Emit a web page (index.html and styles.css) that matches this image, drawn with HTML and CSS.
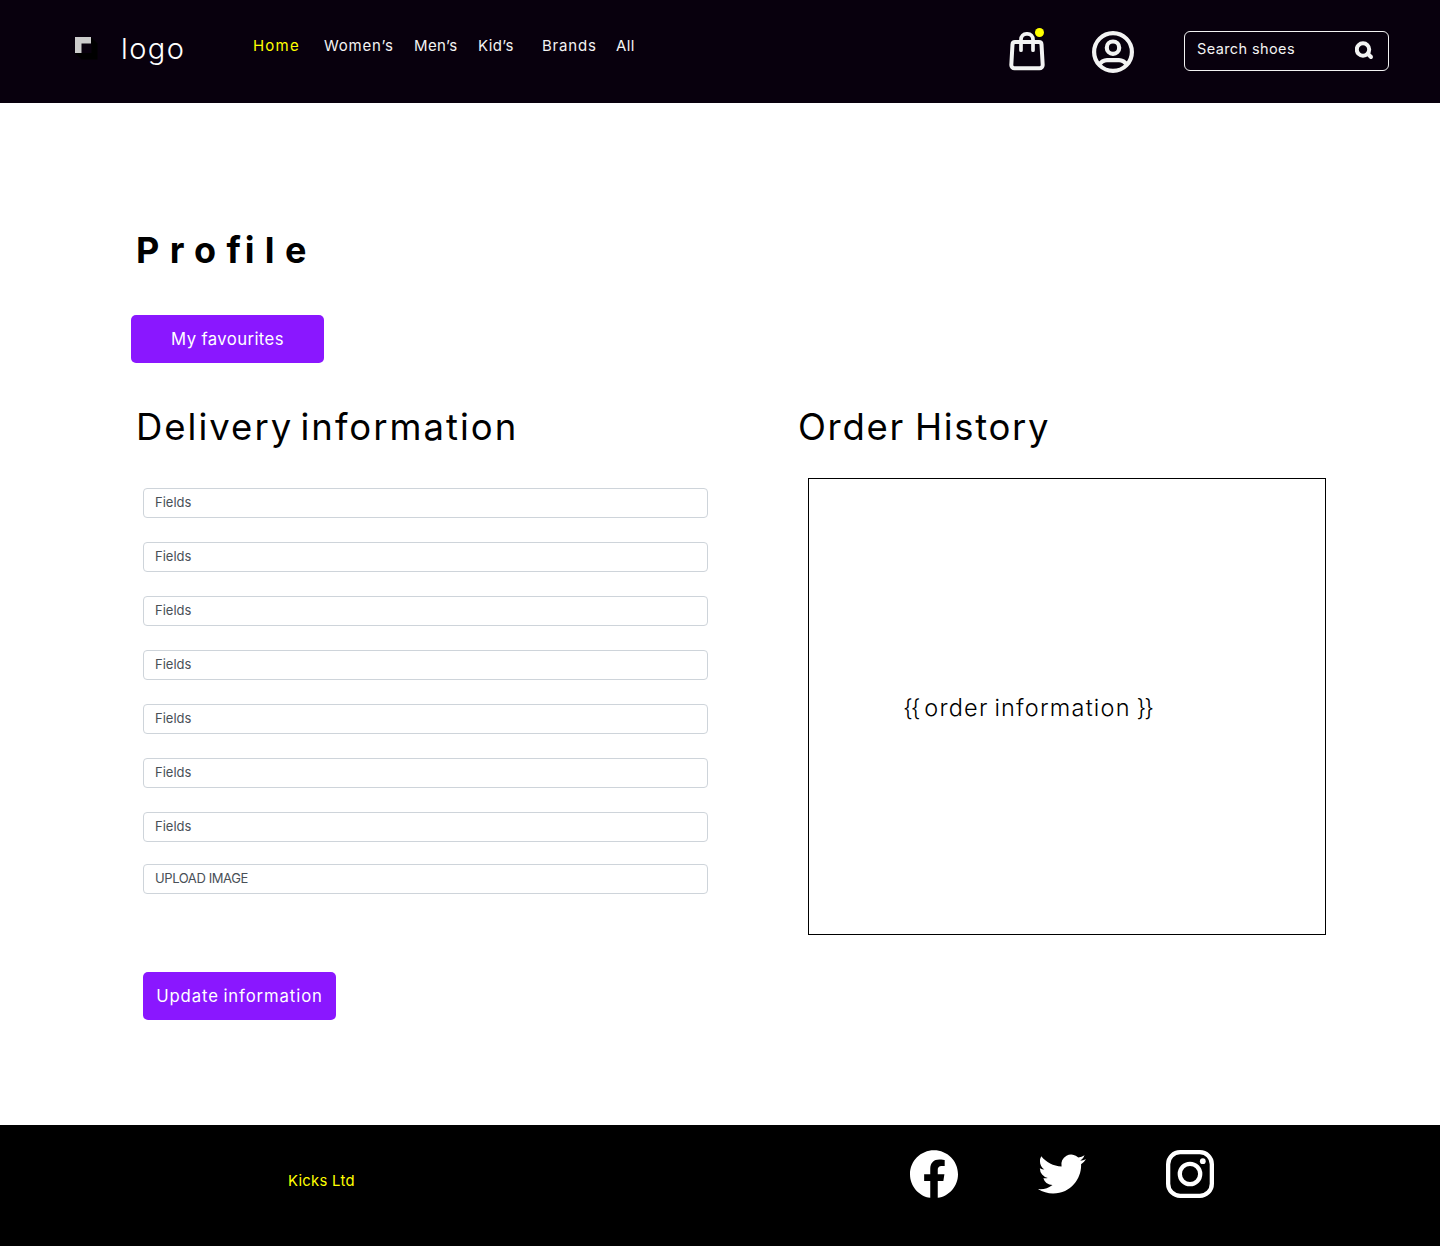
FILE: index.html
```html
<!DOCTYPE html>
<html lang="en">
<head>
<meta charset="utf-8">
<title>Profile</title>
<link rel="stylesheet" href="styles.css">
</head>
<body>
<header class="header">
  <a class="brand">
    <svg class="brand-mark" width="23" height="23" viewBox="0 0 23 23"><path fill="#000" d="M16 0l6.500 6.500V22.500H6.500L0 16z"/><path fill="#08000d" d="M6.500 6.500h10v9.500h-10z"/><path fill="#ccc" d="M0 0h16v6.500H6.500V16H0z"/></svg>
    <span class="brand-name">logo</span>
  </a>
  <nav class="nav">
    <a class="active">Home</a><a>Women’s</a><a class="snug">Men’s</a><a class="snug">Kid’s</a><a>Brands</a><a class="snug">All</a>
  </nav>
  <div class="tools">
    <svg class="bag" width="38" height="46" viewBox="0 0 38 46" fill="none" stroke="#f3f3f3" stroke-width="4" stroke-linecap="round" stroke-linejoin="round"><path d="M7 14H31a2.500 2.500 0 0 1 2.500 2.300L34.700 37a3.200 3.200 0 0 1-3.200 3.200H6.500A3.200 3.200 0 0 1 3.300 37L4.500 16.300A2.500 2.500 0 0 1 7 14z"/><path stroke-width="3.700" d="M13 22.200V11.500a5.500 5.500 0 0 1 5.500-5.700h1a5.500 5.500 0 0 1 5.500 5.700V22.200"/><circle cx="31.500" cy="4.500" r="4.500" fill="#ff0" stroke="none"/></svg>
    <svg class="user" width="42" height="42" viewBox="0 0 42 42" fill="none" stroke="#f3f3f3" stroke-width="4.200"><circle cx="21" cy="21" r="18.900"/><circle cx="21" cy="16.700" r="6.200"/><path d="M6.500 34.500C9 31 11.500 29.200 15 29.200H27c3.500 0 6 1.800 8.500 5.300"/></svg>
    <div class="search">
      <span>Search shoes</span>
      <svg width="19" height="19" viewBox="0 0 19 19" fill="none" stroke="#f3f3f3" stroke-width="4"><circle cx="8" cy="8.500" r="6.200"/><path stroke-linecap="round" d="M13 13l3 3"/></svg>
    </div>
  </div>
</header>
<main class="main">
  <h1 class="title">Pro<span class="title-tight">f</span>ile</h1>
  <button class="button favourites"><span>My favourites</span></button>
  <div class="columns">
    <section class="delivery">
      <h2 class="heading delivery-heading">Delivery information</h2>
      <div class="fields">
        <div class="field">Fields</div>
        <div class="field">Fields</div>
        <div class="field">Fields</div>
        <div class="field">Fields</div>
        <div class="field">Fields</div>
        <div class="field">Fields</div>
        <div class="field">Fields</div>
        <div class="field upload">UPLOAD IMAGE</div>
      </div>
      <button class="button update"><span>Update information</span></button>
    </section>
    <section class="history">
      <h2 class="heading history-heading">Order History</h2>
      <div class="orders"><span class="brace">{{</span> order information <span class="brace">}}</span></div>
    </section>
  </div>
</main>
<footer class="footer">
  <span class="company">Kicks Ltd</span>
  <div class="social">
    <svg width="48" height="48" viewBox="0 0 24 24" fill="#fff"><path d="M24 12.073c0-6.627-5.373-12-12-12s-12 5.373-12 12c0 5.990 4.388 10.954 10.125 11.854v-8.385H7.078v-3.470h3.047V9.430c0-3.007 1.792-4.669 4.533-4.669 1.312 0 2.686.235 2.686.235v2.953H15.830c-1.491 0-1.956.925-1.956 1.874v2.250h3.328l-.532 3.470h-2.796v8.385C19.612 23.027 24 18.062 24 12.073z"/></svg>
    <svg width="48" height="48" viewBox="0 0 24 24" fill="#fff"><path d="M23.953 4.570a10 10 0 0 1-2.825.775 4.958 4.958 0 0 0 2.163-2.723c-.951.555-2.005.959-3.127 1.184a4.920 4.920 0 0 0-8.384 4.482C7.690 8.095 4.067 6.130 1.640 3.162a4.822 4.822 0 0 0-.666 2.475c0 1.710.870 3.213 2.188 4.096a4.904 4.904 0 0 1-2.228-.616v.060a4.923 4.923 0 0 0 3.946 4.827 4.996 4.996 0 0 1-2.212.085 4.936 4.936 0 0 0 4.604 3.417 9.867 9.867 0 0 1-6.102 2.105c-.390 0-.779-.023-1.170-.067a13.995 13.995 0 0 0 7.557 2.209c9.053 0 13.998-7.496 13.998-13.985 0-.210 0-.420-.015-.630A9.935 9.935 0 0 0 24 4.590z"/></svg>
    <svg width="48" height="48" viewBox="0 0 48 48" fill="none" stroke="#fff" stroke-width="4.300"><rect x="2.150" y="2.150" width="43.700" height="43.700" rx="12"/><circle cx="24" cy="24" r="10.200"/><circle cx="36.800" cy="11.200" r="2.900" fill="#fff" stroke="none"/></svg>
  </div>
</footer>
</body>
</html>
```
FILE: styles.css
```css
* { box-sizing: border-box; }
body { margin: 0; background: #fff; color: #000; font-family: Inter, sans-serif; }
svg { display: block; flex: none; }
h1, h2 { margin: 0; }
span, a { white-space: nowrap; }

.header { display: flex; align-items: flex-start; height: 103px; padding-left: 75px; background: #08000d; color: #f3f3f3; }
.brand { display: flex; width: 178px; padding-top: 37px; }
.brand-name { margin-left: 23px; color: #fff; font-size: 29px; font-weight: 300; line-height: 24px; letter-spacing: 1.4px; }
.nav { display: grid; grid-template-columns: 71px 90px 64px 64px 74px auto; width: 756px; padding-top: 36px; font-size: 15px; line-height: 20px; letter-spacing: 0.8px; }
.active { color: #ff0; letter-spacing: 1.2px; }
.snug { letter-spacing: 0.4px; }
.tools { display: flex; align-items: flex-start; padding-top: 28px; }
.bag { margin-left: -1px; }
.user { margin: 3px 50px 0 46px; }
.search { display: flex; justify-content: space-between; width: 205px; height: 40px; margin-top: 3px; padding: 9px 14px 0 12px; border: 1px solid #f3f3f3; border-radius: 6px; font-size: 14.5px; line-height: 16px; letter-spacing: 0.4px; }

.main { height: 1022px; padding: 122px 0 0 131px; }
.title { padding-left: 5px; font-size: 36px; font-weight: 700; line-height: 50px; letter-spacing: 10.4px; }
.title-tight { letter-spacing: 4px; }
.button { display: flex; align-items: center; justify-content: center; width: 193px; height: 48px; padding: 0; border: 0; border-radius: 5px; background: #8a17ff; color: #fff; font-family: inherit; font-size: 16.7px; }
.favourites { margin-top: 40px; letter-spacing: 0.4px; }
.columns { display: flex; margin-top: 39px; }
.delivery { width: 665px; }
.heading { font-size: 36.5px; font-weight: 400; line-height: 50px; }
.delivery-heading { padding-left: 5px; letter-spacing: 2px; word-spacing: -5px; }
.history-heading { padding-left: 2px; letter-spacing: 1.7px; word-spacing: -2px; }
.fields { display: grid; gap: 24px; width: 565px; margin: 36px 0 0 12px; }
.field { height: 30px; padding-left: 11px; border: 1px solid #ced4da; border-radius: 4px; color: #495057; font-size: 13px; line-height: 26px; }
.upload { margin-top: -2px; letter-spacing: -0.4px; }
.update { margin: 78px 0 0 12px; letter-spacing: 0.9px; word-spacing: -1px; }
.orders { width: 518px; height: 457px; margin: 26px 0 0 12px; padding: 214px 0 0 94px; border: 1px solid #000; font-size: 23.5px; font-weight: 300; line-height: 30px; letter-spacing: 1.2px; word-spacing: -2px; }
.brace { letter-spacing: -2px; }

.footer { display: flex; height: 121px; padding-left: 288px; background: #000; }
.company { width: 622px; padding-top: 46px; color: #ff0; font-size: 14.8px; line-height: 20px; letter-spacing: 0.3px; }
.social { display: flex; gap: 80px; padding-top: 25px; }
```
